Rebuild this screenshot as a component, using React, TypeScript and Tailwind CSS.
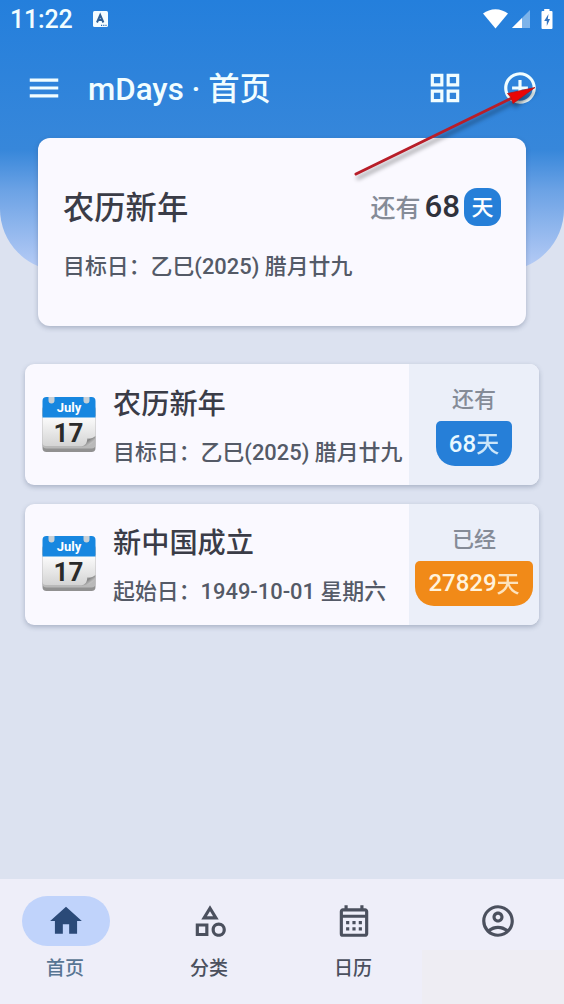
import { ReactNode } from 'react';
import { IconType } from 'react-icons';
import {
  MdAddCircleOutline,
  MdHome,
  MdMenu,
  MdOutlineAccountCircle,
  MdOutlineCalendarMonth,
  MdOutlineCategory,
  MdOutlineGridView,
} from 'react-icons/md';

type Evento = {
  id: number;
  title: string;
  detail: string;
  status: string;
  days: number;
  past: boolean;
};

const events: Evento[] = [
  { id: 1, title: '农历新年', detail: '目标日：乙巳(2025) 腊月廿九', status: '还有', days: 68, past: false },
  { id: 2, title: '新中国成立', detail: '起始日：1949-10-01 星期六', status: '已经', days: 27829, past: true },
];

const tabs: { label: string; icon: IconType; active?: boolean }[] = [
  { label: '首页', icon: MdHome, active: true },
  { label: '分类', icon: MdOutlineCategory },
  { label: '日历', icon: MdOutlineCalendarMonth },
  { label: '', icon: MdOutlineAccountCircle },
];

function StatusBar() {
  return (
    <div className="flex h-[38px] items-center pr-[10px] pl-[10px] text-[#f1fdff]">
      <span className="text-[25px] leading-none font-medium tracking-[-0.2px]">11:22</span>
      <svg className="ml-[21px]" width="15" height="16" viewBox="0 0 15 16">
        <rect width="15" height="16" rx="1.5" fill="#f4fcff" />
        <path d="M4 11.500 7.200 4 10.400 11.500M5.200 9h4" fill="none" stroke="#2f5f95" strokeWidth="2" />
        <path d="M8 14.300h1.200M10.200 14.300h1.200M12.400 14.300h1.200" stroke="#2f6fb5" strokeWidth="1.2" />
      </svg>
      <div className="ml-auto flex items-center">
        <svg width="25" height="20" viewBox="0 0 25 20">
          <path d="M0 4.600C3.600 1.800 8 .2 12.500.2S21.400 1.800 25 4.600L12.500 19.400z" fill="#fff" />
        </svg>
        <svg className="ml-[4px]" width="18" height="18" viewBox="0 0 18 18">
          <path d="M18 0v18H0z" fill="#fff" fillOpacity=".4" />
          <path d="M10 8v10H0z" fill="#fff" />
        </svg>
        <svg className="mr-px ml-[11px]" width="12" height="21" viewBox="0 0 12 21">
          <path d="M3.200 0h5.300v2H10.500a1 1 0 0 1 1 1V19a1 1 0 0 1-1 1H1.500a1 1 0 0 1-1-1V3a1 1 0 0 1 1-1H3.200z" fill="#fff" />
          <path d="M7.500 5 3.200 12h2.600v5L9 10H6.800z" fill="#3575c0" />
        </svg>
      </div>
    </div>
  );
}

function AppBar() {
  return (
    <div className="flex h-[100px] items-center pr-[25px] pl-[25px] text-[#f1fdff]">
      <MdMenu className="h-[38px] w-[38px]" />
      <h1 className="mt-[3px] ml-[25px] text-[31.300px] leading-none font-medium whitespace-pre">mDays · 首页</h1>
      <MdOutlineGridView className="ml-auto h-[38px] w-[38px]" />
      <MdAddCircleOutline className="ml-[37px] h-[38px] w-[38px]" />
    </div>
  );
}

function HeroCard() {
  return (
    <div className="mx-[38px] h-[188px] rounded-[12px] bg-[#faf9ff] pt-[50px] pr-[25px] pl-[25px] shadow-[0_2px_5px_rgba(50,65,100,0.3)]">
      <div className="flex h-[38px] items-center">
        <h2 className="mt-[3px] text-[31.300px] leading-none font-medium text-[#3a3c47]">农历新年</h2>
        <div className="ml-auto flex items-center">
          <span className="mt-[3px] text-[25px] leading-none font-medium text-[#858b97]">还有</span>
          <span className="ml-[4px] text-[31.300px] leading-none font-medium text-[#30323c]">68</span>
          <span className="ml-[4px] flex h-[38px] w-[37px] items-center justify-center rounded-[13px] bg-[#267fd8] pt-[2px] text-[22px] leading-none font-medium text-white">
            天
          </span>
        </div>
      </div>
      <p className="mt-[30px] text-[21.900px] leading-[22px] font-medium text-[#545a67]">目标日：乙巳(2025) 腊月廿九</p>
    </div>
  );
}

function CalendarIcon() {
  return (
    <svg width="54" height="58" viewBox="0 0 54 58" className="shrink-0">
      <defs>
        <linearGradient id="page" x1="0" y1="0" x2="0" y2="1">
          <stop offset="0" stopColor="#fdfdfd" />
          <stop offset="1" stopColor="#d4d4d4" />
        </linearGradient>
        <linearGradient id="curl" x1="0" y1="0" x2="1" y2="1">
          <stop offset="0.100" stopColor="#e4e4e4" />
          <stop offset="0.450" stopColor="#858585" />
          <stop offset="0.700" stopColor="#c4c4c4" />
        </linearGradient>
      </defs>
      <rect x="0.500" y="10" width="53" height="46" rx="4" fill="#919191" />
      <rect x="0.500" y="9" width="53" height="43.500" rx="4" fill="#b9b9b9" />
      <path d="M.5 20h53v21L42.500 50H4a3.500 3.500 0 0 1-3.500-3.500z" fill="url(#page)" />
      <path d="M.5 21.500V5a4 4 0 0 1 4-4h45a4 4 0 0 1 4 4v16.500z" fill="#1787e0" />
      <path d="M39.500 50.500c4-1 6-4 5.500-8 3 .4 6.500-.5 8.500-2.500C53 46 48 50.500 39.500 50.500z" fill="url(#curl)" />
      <path d="M6.500 1h6v3.500a3 3 0 0 1-6 0zM41.500 1h6v3.500a3 3 0 0 1-6 0z" fill="#c8d0d6" />
      <text x="27" y="16" textAnchor="middle" fontSize="13" fontWeight="700" fill="#fff">
        July
      </text>
      <text x="26.500" y="45.500" textAnchor="middle" fontSize="26" fontWeight="700" fill="#2a2a2a">
        17
      </text>
    </svg>
  );
}

function EventCard({ event }: { event: Evento }) {
  return (
    <div className="flex h-[121px] overflow-hidden rounded-[9px] bg-[#faf9ff] shadow-[0_2px_5px_rgba(50,65,100,0.3)]">
      <div className="flex w-[384px] items-center pl-[17px]">
        <CalendarIcon />
        <div className="mt-[5px] ml-[17px] flex flex-col gap-[23px] whitespace-nowrap">
          <h3 className="text-[28.200px] leading-[28px] font-medium text-[#3a3c47]">{event.title}</h3>
          <p className="text-[21.900px] leading-[22px] font-medium text-[#545a67]">{event.detail}</p>
        </div>
      </div>
      <div className="flex w-[130px] flex-col items-center bg-[#ebeff9] pt-[25px]">
        <span className="text-[22px] leading-[22px] font-medium text-[#858b97]">{event.status}</span>
        <span
          className={`mt-[10px] flex h-[45px] items-center rounded-t-[5px] rounded-b-[19px] px-[13px] text-[24px] leading-none font-medium ${
            event.past ? 'bg-[#f18a18] text-[#fff3dc]' : 'bg-[#267fd8] text-[#e9f8ff]'
          }`}
        >
          {event.days}
          <span className="pt-[2px] text-[23px] opacity-85">天</span>
        </span>
      </div>
    </div>
  );
}

function NavItem({ label, active, children }: { label: string; active?: boolean; children: ReactNode }) {
  return (
    <button className={`flex flex-col items-center ${active ? 'text-[#2b4a78]' : 'text-[#4b505e]'}`}>
      <span className={`flex h-[50px] w-[88px] items-center justify-center rounded-full ${active ? 'bg-[#c0d3fb]' : ''}`}>
        {children}
      </span>
      <span className={`mt-[13px] mr-[2px] text-[19px] leading-[19px] font-medium ${active ? 'text-[#587593]' : ''}`}>
        {label}
      </span>
    </button>
  );
}

// Red pointer drawn over the add button
function Pointer() {
  return (
    <svg className="pointer-events-none absolute top-[70px] left-[345px] drop-shadow-[2px_4px_2px_rgba(0,0,0,0.4)]" width="200" height="115" viewBox="345 70 200 115">
      <path d="M356 174 514 97" stroke="#b81e29" strokeWidth="3" strokeLinecap="round" />
      <path d="M535 87.500 507.500 93.500 511 97.500 513 103.500z" fill="#ea0505" stroke="#b51212" strokeWidth=".8" />
    </svg>
  );
}

export default function App() {
  return (
    <div className="relative flex h-[1004px] w-[564px] flex-col overflow-hidden bg-[#dce2f0] font-[Roboto,'Noto_Sans_CJK_SC',sans-serif]">
      <header className="h-[271px] shrink-0 rounded-b-[62px] bg-[linear-gradient(to_bottom,#247fdc_0px,#3787da_150px,#6ba2e5_190px,#b9cdf6_271px)]">
        <StatusBar />
        <AppBar />
      </header>

      <main className="-mt-[133px] flex-1">
        <HeroCard />
        <div className="mx-[25px] mt-[38px] flex flex-col gap-[18.5px]">
          {events.map(event => (
            <EventCard key={event.id} event={event} />
          ))}
        </div>
      </main>

      <nav className="relative grid h-[125px] shrink-0 grid-cols-4 gap-[12px] bg-[#eeeef9] pt-[17px]">
        <div className="absolute right-0 bottom-0 h-[54px] w-[142px] bg-[#eeedf3]" />
        {tabs.map(({ label, icon: Icon, active }) => (
          <NavItem key={label} label={label} active={active}>
            <Icon className="h-[38px] w-[38px]" />
          </NavItem>
        ))}
      </nav>

      <Pointer />
    </div>
  );
}
